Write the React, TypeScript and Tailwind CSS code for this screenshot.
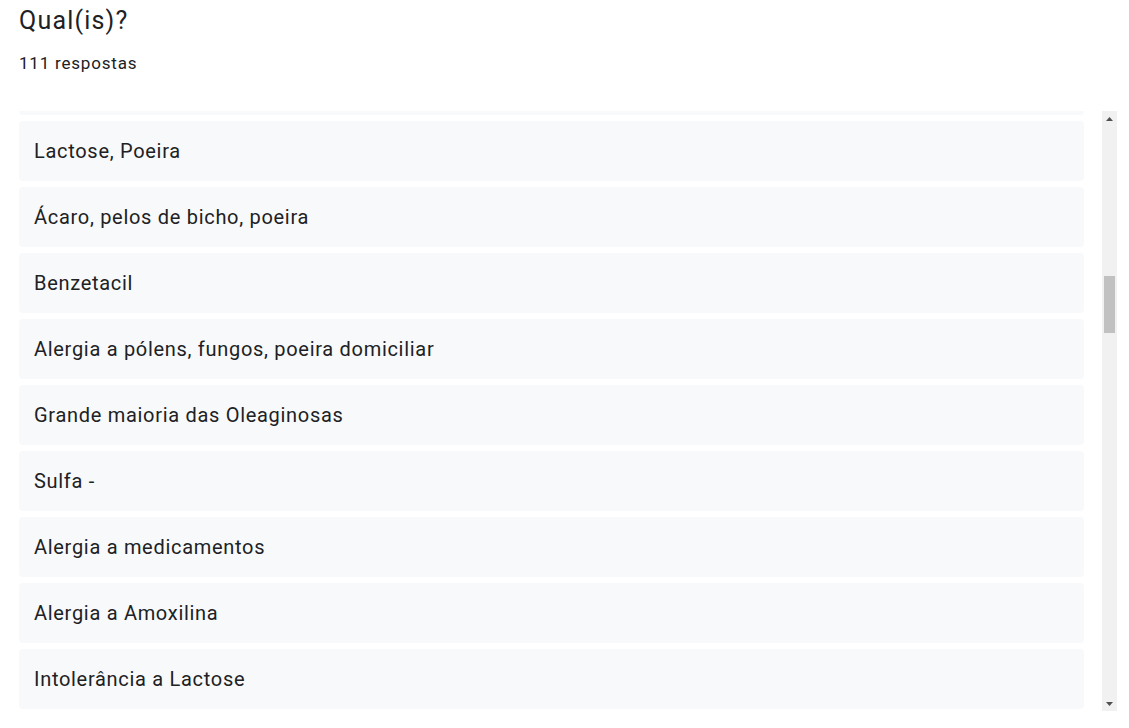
import React from "react";

const items = [
  "Lactose, Poeira",
  "Ácaro, pelos de bicho, poeira",
  "Benzetacil",
  "Alergia a pólens, fungos, poeira domiciliar",
  "Grande maioria das Oleaginosas",
  "Sulfa -",
  "Alergia a medicamentos",
  "Alergia a Amoxilina",
  "Intolerância a Lactose",
];

export default function App() {
  return (
    <div className="w-[1129px] h-[728px] bg-white text-[#202124]" style={{ fontFamily: "Roboto, 'Noto Sans', sans-serif" }}>
      <div className="pl-[19px] pt-[6px]">
        <div className="text-[25px] leading-[30px] tracking-[1.2px]">Qual(is)?</div>
        <div className="mt-[17px] text-[17px] leading-[20px] tracking-[0.8px]">111 respostas</div>
      </div>
      <div className="mt-[38px] ml-[19px] flex h-[600px] w-[1098px]">
        <div className="flex-1 overflow-hidden pr-[18px]">
          <div className="-mt-[56px] flex flex-col gap-[6px]">
            <div className="h-[60px] shrink-0 rounded-[4px] bg-[#f8f9fa]" />
            {items.map((t) => (
              <div key={t} className="flex h-[60px] shrink-0 items-center rounded-[4px] bg-[#f8f9fa] px-[15px] text-[20px] tracking-[0.7px]">
                {t}
              </div>
            ))}
          </div>
        </div>
        <div className="flex w-[15px] flex-col bg-[#f1f1f1]">
          <div className="flex h-[15px] items-center justify-center">
            <svg width="7" height="4" viewBox="0 0 7 4"><polygon points="0,4 7,4 3.5,0" fill="#505050" /></svg>
          </div>
          <div className="flex-1 px-[2px] pt-[150px]">
            <div className="h-[57px] bg-[#c1c1c1]" />
          </div>
          <div className="flex h-[15px] items-center justify-center">
            <svg width="7" height="4" viewBox="0 0 7 4"><polygon points="0,0 7,0 3.5,4" fill="#505050" /></svg>
          </div>
        </div>
      </div>
    </div>
  );
}
